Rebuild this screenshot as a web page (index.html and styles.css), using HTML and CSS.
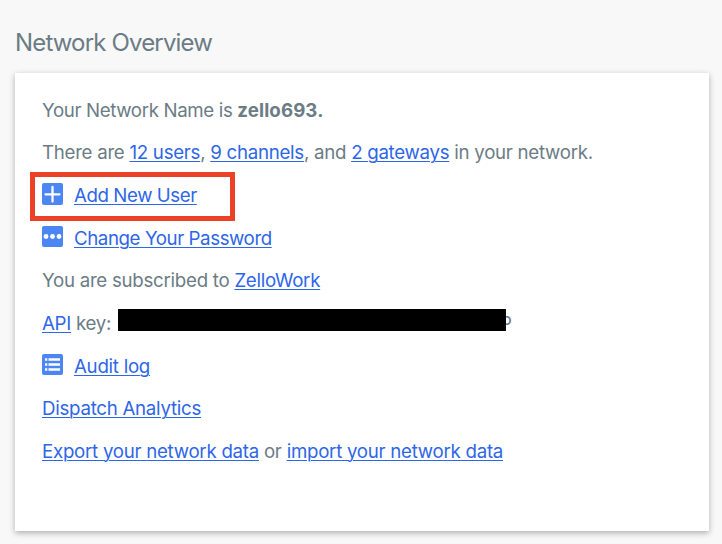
FILE: index.html
```html
<!DOCTYPE html>
<html lang="en">
  <head>
    <meta charset="UTF-8" />
    <title>Network Overview</title>
    <link rel="stylesheet" href="styles.css">
  </head>
  <body>
    <h1>Network Overview</h1>
    <section class="card">
      <p class="name">Your Network Name is <b>zello693.</b></p>
      <p class="counts">There are <a href="#">12 users</a>, <a href="#">9 channels</a>, and <a href="#">2 gateways</a> in your network.</p>
      <p class="row add">
        <svg class="icon tall" viewBox="0 0 21 22">
          <rect width="21" height="22" rx="2" fill="#4c86f5" />
          <path d="M10.5 4v14.5M3.5 11.3h14" stroke="#fff" stroke-width="2.3" stroke-linecap="round" />
        </svg>
        <a href="#">Add New User</a>
      </p>
      <p class="row password">
        <svg class="icon" viewBox="0 0 21 21">
          <rect width="21" height="21" rx="2" fill="#4c86f5" />
          <g fill="#fff">
            <circle cx="4" cy="10.5" r="2.4" />
            <circle cx="10.5" cy="10.5" r="2.4" />
            <circle cx="17" cy="10.5" r="2.4" />
          </g>
        </svg>
        <a href="#">Change Your Password</a>
      </p>
      <p class="plan">You are subscribed to <a href="#">ZelloWork</a></p>
      <p class="api"><a href="#">API</a> key: <span class="key"><span class="redacted"></span>P</span></p>
      <p class="row audit">
        <svg class="icon" viewBox="0 0 21 21">
          <rect width="21" height="21" rx="2" fill="#4c86f5" />
          <path d="M3 5.5h2.3M3 10.5h2.3M3 15.5h2.3M6.5 5.5h11.5M6.5 10.5h11.5M6.5 15.5h11.5" stroke="#fff" stroke-width="2.3" />
        </svg>
        <a href="#">Audit log</a>
      </p>
      <p class="analytics"><a href="#">Dispatch Analytics</a></p>
      <p class="export"><a href="#">Export your network data</a> or <a href="#">import your network data</a></p>
    </section>
  </body>
</html>
```

FILE: styles.css
```css
body {
  margin: 0;
  height: 544px;
  overflow: hidden;
  background: #f8f8f8;
  color: #6b7c85;
  font-family: Inter, "Liberation Sans", sans-serif;
  font-size: 18.7px;
  letter-spacing: -0.27px;
}

h1 {
  margin: 0;
  padding: 27px 0 14px 15px;
  font-size: 24px;
  font-weight: 400;
  line-height: 32px;
  letter-spacing: -0.84px;
}

.card {
  box-sizing: border-box;
  width: 694px;
  height: 458px;
  margin-left: 15px;
  padding: 16.6px 27px;
  background: #fff;
  box-shadow: 0 2px 6px rgba(0, 0, 0, 0.3);
}

p {
  margin: 0;
  height: 42.65px;
  line-height: 42.65px;
  white-space: nowrap;
}

a {
  color: #2e66e8;
  text-decoration: underline;
  text-decoration-thickness: 1px;
  text-underline-offset: 2px;
  text-decoration-skip-ink: auto;
}

.name {
  letter-spacing: -0.36px;
}

.name b {
  letter-spacing: 0.1px;
}

.counts {
  letter-spacing: -0.28px;
}

.add,
.password {
  letter-spacing: -0.42px;
}

.row {
  display: flex;
  align-items: center;
  gap: 11px;
}

.icon {
  width: 21px;
  height: 21px;
  margin-bottom: 4px;
}

.icon.tall {
  height: 22px;
  margin-bottom: 5px;
}

.add {
  position: relative;
}

/* callout frame around the link */
.add::after {
  content: "";
  position: absolute;
  box-sizing: border-box;
  left: -12px;
  top: -2.8px;
  width: 205px;
  height: 49px;
  border: 5px solid #ea4127;
}

.audit a {
  padding-top: 1px;
}

.api {
  display: flex;
  align-items: center;
  white-space: pre;
}

.key {
  display: flex;
  align-items: center;
}

.redacted {
  position: relative;
  width: 388px;
  height: 22px;
  margin: 0 -6px 8px 1.8px;
  background: #000;
}
```
